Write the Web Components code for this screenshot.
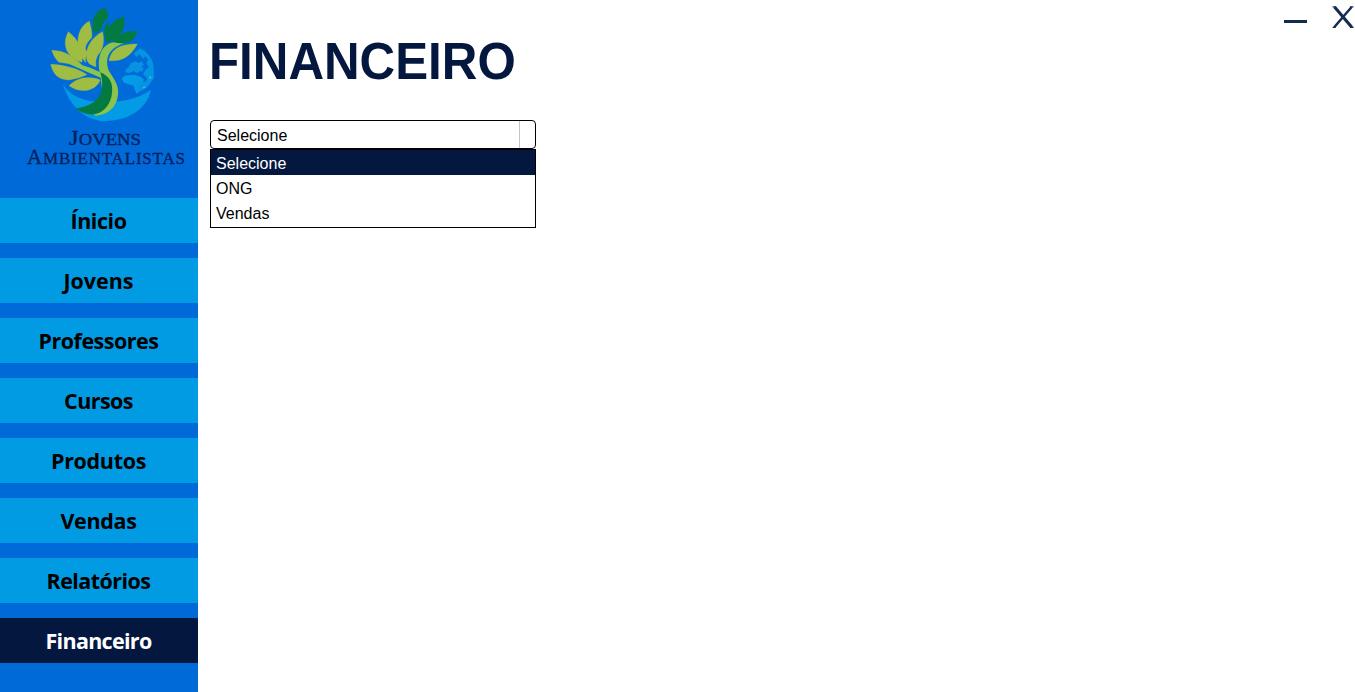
<!DOCTYPE html>
<html lang="pt-BR">
<head>
<meta charset="utf-8">
<title>Financeiro</title>
<style>
html,body{margin:0;height:100%;overflow:hidden;background:#fff}
body{font-family:"Liberation Sans",Arial,sans-serif}
</style>
</head>
<body>
<app-shell>
  <side-bar slot="side">
    <brand-logo slot="brand"></brand-logo>
    <nav-item width="56">Ínicio</nav-item>
    <nav-item width="70">Jovens</nav-item>
    <nav-item width="120">Professores</nav-item>
    <nav-item width="69">Cursos</nav-item>
    <nav-item width="95">Produtos</nav-item>
    <nav-item width="76">Vendas</nav-item>
    <nav-item width="104">Relatórios</nav-item>
    <nav-item width="106" active>Financeiro</nav-item>
  </side-bar>
  <page-title>FINANCEIRO</page-title>
  <combo-box value="Selecione">
    <combo-option selected>Selecione</combo-option>
    <combo-option>ONG</combo-option>
    <combo-option>Vendas</combo-option>
  </combo-box>
  <window-controls slot="controls"></window-controls>
</app-shell>
<script>
function define(name, html, setup) {
  customElements.define(name, class extends HTMLElement {
    constructor() {
      super();
      this.attachShadow({mode: 'open'}).innerHTML = html;
    }
    connectedCallback() { if (setup) setup(this, this.shadowRoot); }
  });
}

define('app-shell', `<style>
:host{display:flex;height:692px;width:1355px;background:#fff}
main{flex:1;padding:31px 0 0 12px}
</style><slot name="side"></slot><main><slot></slot></main><slot name="controls"></slot>`);

define('side-bar', `<style>
:host{display:block;width:198px;flex:none;background:#006ad9}
nav{display:flex;flex-direction:column;gap:15px}
</style><slot name="brand"></slot><nav><slot></slot></nav>`);

define('nav-item', `<style>
:host{display:flex;justify-content:center;box-sizing:border-box;padding-right:1px;height:45px;background:#009be3;color:#000;font:700 21.5px/46px "Open Sans","Noto Sans",sans-serif;white-space:nowrap}
:host([active]){background:#04173f;color:#fff}
span{display:block;flex:none}
</style><span><slot></slot></span>`, (el, root) => {
  // Condense or expand tracking so the label takes its nominal width.
  const span = root.querySelector('span');
  const extra = el.getAttribute('width') - span.getBoundingClientRect().width;
  span.style.letterSpacing = extra / el.textContent.length + 'px';
});

define('page-title', `<style>
:host{display:block;height:89px;color:#04173f;font-weight:700;font-size:52px;line-height:60px}
span{display:inline-block;transform:scaleX(.948);transform-origin:0 0;margin-left:-1px}
</style><span><slot></slot></span>`);

define('combo-box', `<style>
:host{display:block;width:326px;font-size:16px;color:#000}
.field{display:flex;box-sizing:border-box;height:29px;border:1px solid #000;border-radius:4px;line-height:29px;padding-left:6px}
.value{flex:1}
.button{width:15px;border-left:1px solid #c0c4cc}
.list{box-sizing:border-box;height:79px;border:1px solid #000}
</style><div class="field"><span class="value"></span><span class="button"></span></div><div class="list"><slot></slot></div>`,
(el, root) => { root.querySelector('.value').textContent = el.getAttribute('value'); });

define('combo-option', `<style>
:host{display:block;height:25px;line-height:27px;padding-left:5px}
:host([selected]){background:#04173f;color:#fff}
</style><slot></slot>`);

define('window-controls', `<style>
:host{display:block;width:75px;height:35px;flex:none}
svg{display:block}
</style><svg width="75" height="35" viewBox="0 0 75 35">
<path d="M4 20h23v3H4z" fill="#112d4e"/>
<g fill="none" stroke="#152c53"><path d="M54.6 7 71.8 27.3" stroke-width="3.1"/><path d="M71.6 7 54.2 27.3" stroke-width="2.5"/><path d="M52.6 6.9h3.4M70 6.9h3.4M52.6 27.3h3M70 27.3h3.6" stroke-width="1.2"/></g></svg>`);

define('brand-logo', `<style>
:host{display:block;height:198px}
svg{display:block}
text{font-family:"Liberation Serif",serif;fill:#06215c;stroke:#06215c;stroke-width:.35}
</style><svg width="198" height="198" viewBox="0 0 198 198">
<g transform="translate(40 0) scale(.33333)">
<path d="M68 252Q90 290 145 302Q205 310 262 300Q305 289 333 269Q324 313 283 340Q240 366 181 363Q101 350 68 252Z" fill="#039be5"/>
<path d="M246 238Q247 226 263 226L284 225 303 231 312 239 307 250 301 266 289 281 284 267 282 257 265 253 252 248Z" fill="#039be5"/>
<path d="M258 208 264 204 272 190 286 184 296 189 304 184 312 194 303 201 312 205 306 216 298 213 294 220 280 214 267 219 255 217Z" fill="#0793e2"/>
<path d="M300 145Q330 158 340 193L342 234 322 262 289 281 300 250 318 244 322 236 309 222 318 208 327 202 319 190 325 178 315 169 310 177 299 163 289 171 281 160Z" fill="#0594e2"/>
<path d="M309 260l5-1 1 5-5 1ZM327 231l5-2 2 5-5 2Z" fill="#55b9ee"/>
<g fill="#9fbd43" stroke="#9fbd43" stroke-width="1">
<path d="M126 187C84 174 62 138 85 95C114 119 133 147 126 187Z"/>
<path d="M137 188C103 145 107 83 148 64Q158 99 155 113C134 133 133 149 142 156Q135 173 137 188Z"/>
<path d="M150 193C127 174 140 119 188 95C196 136 184 153 174 165Q165 178 168 201Z"/>
<path d="M35 151C79 152 99 172 125 194L117 202Q93 190 57 187Q43 176 35 151Z"/>
<path d="M32 193C70 194 112 205 141 224Q116 236 87 240C52 239 39 221 32 193Z"/>
<path d="M87 257C110 235 142 225 181 240C165 277 119 280 87 257Z"/>
<path d="M207 182C214 146 239 132 292 132C272 169 246 186 207 182Z"/>
</g>
<path d="M82 189Q130 190 179 216C169 163 190 125 232 126L252 130C205 146 193 176 207 213C225 243 241 258 232 297Q219 341 168 347L136 331 188 284 182 233Q140 216 82 189Z" fill="#8cc34a"/>
<g fill="#047a43">
<path d="M161 102C151 63 163 35 190 24Q205 25 204 55Q185 67 184 89Z"/>
<path d="M199 128Q189 91 195 78L207 64Q206 78 208 84C216 65 231 54 253 50C258 87 243 115 199 128Z"/>
<path d="M217 125C238 98 260 92 293 94C281 126 265 133 233 129Z"/>
<path d="M181 217C208 228 220 250 216 278C211 333 159 366 106 325C151 321 204 297 181 217Z"/>
</g></g>
<text y="145.2" x="69" font-size="22" textLength="72" lengthAdjust="spacingAndGlyphs">J<tspan font-size="16.5">OVENS</tspan></text>
<text y="164" x="27" font-size="21" textLength="158" lengthAdjust="spacing">A<tspan font-size="17">MBIENTALISTAS</tspan></text>
</svg>`);
</script>
</body>
</html>
